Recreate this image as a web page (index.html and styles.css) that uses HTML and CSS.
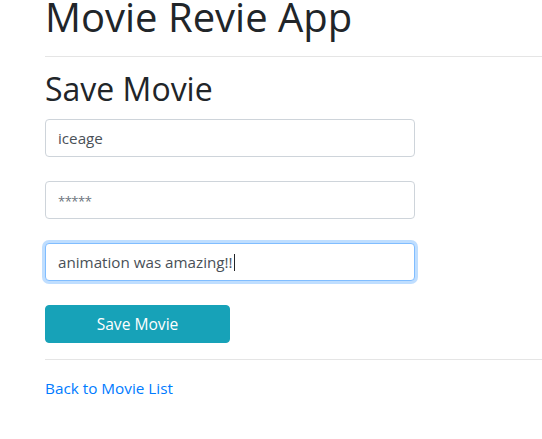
FILE: index.html
```html
<!DOCTYPE html>
<html lang="en">
<head>
<meta charset="utf-8">
<title>Movie Revie App</title>
<link rel="stylesheet" href="styles.css">
</head>
<body>
<div class="container">
  <h1 class="title">Movie Revie App</h1>
  <hr class="rule">
  <h2 class="subtitle">Save Movie</h2>
  <form class="movie-form">
    <input class="form-control" type="text" value="iceage">
    <input class="form-control" type="text" placeholder="*****">
    <div class="form-control focused">animation was amazing!!<span class="caret"></span></div>
    <button class="btn-info" type="button">Save Movie</button>
  </form>
  <hr class="rule rule-bottom">
  <a class="back-link" href="#">Back to Movie List</a>
</div>
</body>
</html>
```
FILE: styles.css
```css
html, body {
  margin: 0;
  background: #fff;
}
body {
  font-family: "Open Sans", "Noto Sans", sans-serif;
  font-size: 15.2px;
  line-height: 24px;
  color: #212529;
}
.container {
  padding-left: 45px;
}
.title {
  margin: -7px 0 0;
  font-size: 40px;
  line-height: 48px;
  font-weight: 400;
  color: #212529;
}
.rule {
  margin: 15px 0 13px;
  border: 0;
  border-top: 1px solid rgba(0, 0, 0, 0.1);
  height: 0;
}
.subtitle {
  margin: 0 0 11px;
  font-size: 32px;
  line-height: 38px;
  font-weight: 400;
  color: #212529;
}
.movie-form {
  display: flex;
  flex-direction: column;
  align-items: flex-start;
  gap: 24px;
}
.form-control {
  box-sizing: border-box;
  display: block;
  width: 370px;
  height: 38px;
  margin: 0;
  padding: 6px 12px;
  font-family: inherit;
  font-size: 15.2px;
  line-height: 24px;
  color: #495057;
  background: #fff;
  border: 1px solid #ced4da;
  border-radius: 4px;
  outline: none;
}
.form-control::placeholder {
  color: #6c757d;
  opacity: 1;
  font-size: 13px;
  letter-spacing: -0.5px;
}
.focused {
  border-color: #80bdff;
  box-shadow: 0 0 0 3px rgba(0, 123, 255, 0.25);
  white-space: nowrap;
}
.caret {
  display: inline-block;
  width: 1px;
  height: 17px;
  margin-left: 1px;
  background: #212529;
  vertical-align: -3px;
}
.btn-info {
  box-sizing: border-box;
  width: 185px;
  height: 38px;
  padding: 6px 12px;
  font-family: inherit;
  font-size: 15.6px;
  line-height: 24px;
  color: #fff;
  background: #17a2b8;
  border: 1px solid #17a2b8;
  border-radius: 4px;
  cursor: pointer;
}
.rule-bottom {
  margin: 16px 0 16px;
}
.back-link {
  display: inline-block;
  color: #007bff;
  text-decoration: none;
  font-size: 15.3px;
  line-height: 24px;
}
```
